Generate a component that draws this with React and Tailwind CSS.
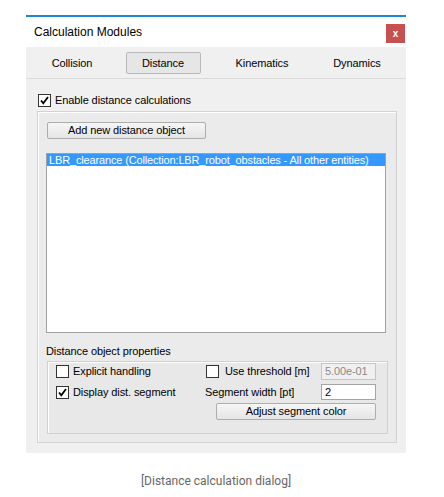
import React from "react";

const Check = ({ checked }) => (
  <div className="w-[13px] h-[13px] bg-white border border-[#333333] flex items-center justify-center shrink-0">
    {checked && (
      <svg width="11" height="11" viewBox="0 0 11 11">
        <path d="M2 5.5 L4.3 8.3 L9 2" fill="none" stroke="#000" strokeWidth="1.8" />
      </svg>
    )}
  </div>
);

const Btn = ({ children, className }) => (
  <div
    className={
      "h-[17px] border border-[#adadad] rounded-[2px] bg-gradient-to-b from-[#f6f6f6] to-[#e5e5e5] flex items-center justify-center text-[#000] " +
      (className || "")
    }
  >
    {children}
  </div>
);

export default function App() {
  return (
    <div
      className="w-[444px] h-[497px] bg-white pt-[15px] pl-[26px]"
      style={{ fontFamily: '"Liberation Sans", Arial, sans-serif' }}
    >
      <div className="w-[380px]">
        <div className="h-[2px] bg-[#1c86d8]" />
        <div className="h-[30px] bg-white flex items-start justify-between pl-[8px] pr-[1px]">
          <div className="text-[12px] text-black leading-[15px] mt-[8px]">Calculation Modules</div>
          <div className="w-[19px] h-[19px] mt-[7px] bg-[#c75050] flex items-center justify-center text-white text-[10px] font-bold leading-none">
            x
          </div>
        </div>
        <div className="h-[406px] bg-[#f0f0f0] text-[11px] text-black tracking-[-0.1px]">
          <div className="h-[32px] border-b border-[#d9d9d9] flex items-center pt-[1px]">
            <div className="w-[92px] text-center">Collision</div>
            <div className="w-[90px] flex justify-center">
              <div className="w-[75px] h-[22px] border border-[#b9b9b9] rounded-[2px] bg-[#e6e6e6] flex items-center justify-center">
                Distance
              </div>
            </div>
            <div className="w-[108px] text-center">Kinematics</div>
            <div className="w-[82px] text-center">Dynamics</div>
          </div>
          <div className="flex items-center mt-[15px] ml-[12px] h-[13px]">
            <Check checked />
            <span className="ml-[4px]">Enable distance calculations</span>
          </div>
          <div className="mt-[4px] ml-[11px] w-[360px] h-[332px] border border-[#d3d3d3] bg-[#ebebeb] shadow-[inset_1px_1px_0_#ffffff]">
            <Btn className="mt-[10px] ml-[9px] w-[159px]">Add new distance object</Btn>
            <div className="mt-[14px] ml-[8px] w-[340px] h-[180px] border border-[#a0a0a0] bg-white">
              <div className="h-[12px] bg-[#3399ff] text-white pl-[2px] leading-[12px] whitespace-nowrap tracking-[-0.15px]">
                LBR_clearance (Collection:LBR_robot_obstacles - All other entities)
              </div>
            </div>
            <div className="mt-[12px] ml-[8px] leading-[12px]">Distance object properties</div>
            <div className="mt-[4px] ml-[9px] w-[341px] h-[73px] border border-[#d0d0d0] bg-[#e8e8e8] shadow-[inset_1px_1px_0_#ffffff]">
              <div className="flex items-center mt-[1px] h-[17px]">
                <div className="w-[157px] flex items-center pl-[8px]">
                  <Check />
                  <span className="ml-[4px]">Explicit handling</span>
                </div>
                <div className="w-[116px] flex items-center pl-[1px]">
                  <Check />
                  <span className="ml-[6px]">Use threshold [m]</span>
                </div>
                <div className="w-[55px] h-[17px] border border-[#c5c5c5] bg-[#f0f0f0] text-[#8a8a8a] pl-[3px] leading-[15px]">
                  5.00e-01
                </div>
              </div>
              <div className="flex items-center mt-[4px] h-[16px]">
                <div className="w-[157px] flex items-center pl-[8px]">
                  <Check checked />
                  <span className="ml-[4px]">Display dist. segment</span>
                </div>
                <div className="w-[116px]">Segment width [pt]</div>
                <div className="w-[55px] h-[16px] border border-[#a5a5a5] bg-white pl-[3px] leading-[14px]">2</div>
              </div>
              <Btn className="mt-[3px] ml-[168px] w-[160px]">Adjust segment color</Btn>
            </div>
          </div>
        </div>
      </div>
      <div
        className="w-[380px] text-center mt-[20px] text-[12px] leading-[16px] text-[#666666]"
        style={{ fontFamily: "Roboto, sans-serif" }}
      >
        [Distance calculation dialog]
      </div>
    </div>
  );
}
